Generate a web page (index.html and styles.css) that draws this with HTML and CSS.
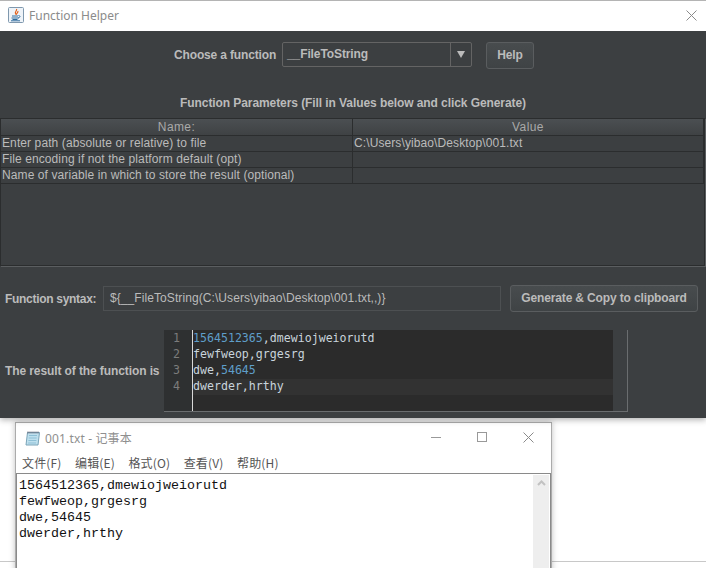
FILE: index.html
```html
<!DOCTYPE html>
<html>
<head>
  <meta charset="utf-8" />
  <title>Function Helper</title>
  <link rel="stylesheet" href="styles.css">
</head>
<body>
  <div class="helper">
    <div class="titlebar">
      <svg class="java-icon" width="16" height="16" viewBox="0 0 16 16">
        <rect x="0.5" y="0.5" width="15" height="15" rx="1" fill="#eef3f8" stroke="#7f98ae"/>
        <path d="M8.5 2c1 1.500-2 2.500-1 4.500 .3.500.6.800.8 1.200-.1-1.200 2.500-2.300 1.500-3.700" fill="none" stroke="#e2601a" stroke-width="1.200"/>
        <path d="M4 9h6M3.500 11h7M4.500 12.500h5" fill="none" stroke="#2f6c9e" stroke-width="1"/>
        <path d="M10.500 8.500c2 0 2 2-.5 2.500M3 13.800h9" fill="none" stroke="#2f6c9e" stroke-width="1"/>
      </svg>
      <span class="titlebar-text">Function Helper</span>
      <svg class="close-icon" width="11" height="11" viewBox="0 0 11 11">
        <path d="M.5.500l10 10M10.500.500l-10 10" stroke="#8a8a8a" stroke-width="1" fill="none"/>
      </svg>
    </div>

    <div class="panel">
      <div class="choose-row">
        <label class="bold-label">Choose a function</label>
        <div class="combo">
          <span class="combo-value">__FileToString</span>
          <span class="combo-arrow"><i></i></span>
        </div>
        <button class="btn btn-help" type="button">Help</button>
      </div>

      <div class="params-title">Function Parameters (Fill in Values below and click Generate)</div>

      <div class="params-table">
        <div class="row head-row">
          <div class="cell head">Name:</div>
          <div class="cell head">Value</div>
        </div>
        <div class="row">
          <div class="cell">Enter path (absolute or relative) to file</div>
          <div class="cell">C:\Users\yibao\Desktop\001.txt</div>
        </div>
        <div class="row">
          <div class="cell">File encoding if not the platform default (opt)</div>
          <div class="cell"></div>
        </div>
        <div class="row">
          <div class="cell">Name of variable in which to store the result (optional)</div>
          <div class="cell"></div>
        </div>
      </div>

      <div class="syntax-row">
        <label class="bold-label">Function syntax:</label>
        <div class="syntax-input">${__FileToString(C:\Users\yibao\Desktop\001.txt,,)}</div>
        <button class="btn btn-generate" type="button">Generate &amp; Copy to clipboard</button>
      </div>

      <div class="result-row">
        <label class="bold-label">The result of the function is</label>
        <div class="editor">
          <div class="gutter">
            <div>1</div>
            <div>2</div>
            <div>3</div>
            <div>4</div>
          </div>
          <div class="code">
            <div class="code-line"><span class="num">1564512365</span>,dmewiojweiorutd</div>
            <div class="code-line">fewfweop,grgesrg</div>
            <div class="code-line">dwe,<span class="num">54645</span></div>
            <div class="code-line current">dwerder,hrthy</div>
          </div>
          <div class="editor-scroll"></div>
        </div>
      </div>
    </div>
  </div>

  <div class="desktop">
    <div class="notepad">
      <div class="np-title">
        <svg class="np-icon" width="16" height="16" viewBox="0 0 16 16">
          <path d="M2.500 2.500h12l-1.500 12.500h-12z" fill="#bfe0ee" stroke="#7aa4b8"/>
          <path d="M4 5.500h8M3.700 8h8M3.400 10.500h8M3.100 13h8" stroke="#8fc0d6" stroke-width="1"/>
          <path d="M3 1.500v2M5 1.500v2M7 1.500v2M9 1.500v2M11 1.500v2M13 1.500v2" stroke="#667" stroke-width="1"/>
        </svg>
        <span class="np-title-text">001.txt - 记事本</span>
        <div class="np-controls">
          <svg width="11" height="11" viewBox="0 0 11 11"><path d="M0 5.500h10" stroke="#999" fill="none"/></svg>
          <svg width="11" height="11" viewBox="0 0 11 11"><rect x="0.500" y="0.500" width="9" height="9" stroke="#999" fill="none"/></svg>
          <svg width="11" height="11" viewBox="0 0 11 11"><path d="M.5.500l10 10M10.500.500l-10 10" stroke="#8a8a8a" fill="none"/></svg>
        </div>
      </div>
      <div class="np-menu">
        <span>文件(F)</span>
        <span>编辑(E)</span>
        <span>格式(O)</span>
        <span>查看(V)</span>
        <span>帮助(H)</span>
      </div>
      <div class="np-body">
        <div class="np-text">1564512365,dmewiojweiorutd
fewfweop,grgesrg
dwe,54645
dwerder,hrthy</div>
        <div class="np-scroll">
          <svg width="9" height="6" viewBox="0 0 9 6"><path d="M1 5l3.500-3.500L8 5" stroke="#c2c2c2" stroke-width="2" fill="none"/></svg>
        </div>
      </div>
    </div>
  </div>
</body>
</html>
```

FILE: styles.css
```css
html, body {
  margin: 0;
  padding: 0;
}

body {
  width: 706px;
  height: 568px;
  overflow: hidden;
  background: #fff;
  font-family: "Liberation Sans", Arial, sans-serif;
  font-size: 12px;
}

/* java window */
.helper {
  position: relative;
  z-index: 1;
  height: 418px;
  display: flex;
  flex-direction: column;
  box-shadow: 0 2px 6px rgba(0, 0, 0, 0.3);
}

.titlebar {
  height: 28px;
  display: flex;
  align-items: center;
  background: #fff;
  border-top: 1px solid #b4b4b4;
  padding: 0 9px 2px 8px;
}

.java-icon {
  margin-right: 5px;
}

.titlebar-text {
  flex: 1;
  font-family: "Noto Sans", sans-serif;
  font-size: 12px;
  margin-top: 1px;
  color: #8b8b8b;
}

.panel {
  flex: 1;
  background: #3c3f41;
  color: #bbbbbb;
  display: flex;
  flex-direction: column;
}

.bold-label {
  font-weight: bold;
  letter-spacing: -0.1px;
  color: #bbbbbb;
}

.choose-row {
  display: flex;
  align-items: flex-start;
  padding: 11px 0 0 174px;
  height: 27px;
}

.choose-row .bold-label {
  width: 102px;
  line-height: 26px;
  letter-spacing: -0.15px;
  white-space: nowrap;
}

.combo {
  width: 188px;
  height: 23px;
  margin-left: 6px;
  display: flex;
  border: 1px solid #646464;
  border-radius: 2px;
}

.combo-value {
  flex: 1;
  padding-left: 4px;
  font-weight: bold;
  letter-spacing: -0.1px;
  line-height: 22px;
}

.combo-arrow {
  width: 20px;
  display: flex;
  align-items: center;
  justify-content: center;
  border-left: 1px solid #646464;
}

.combo-arrow i {
  width: 0;
  height: 0;
  border-left: 4px solid transparent;
  border-right: 4px solid transparent;
  border-top: 7px solid #bbbbbb;
}

.btn {
  padding: 0 0 2px;
  font-family: "Liberation Sans", Arial, sans-serif;
  font-size: 12px;
  font-weight: bold;
  letter-spacing: -0.14px;
  color: #bbbbbb;
  background: linear-gradient(#484c4e, #3f4345);
  border: 1px solid #5a5d5f;
  border-radius: 3px;
}

.btn-help {
  width: 48px;
  height: 27px;
  margin-left: 14px;
}

.params-title {
  margin-top: 27px;
  height: 22px;
  line-height: 14px;
  text-align: center;
  font-weight: bold;
  letter-spacing: -0.08px;
}

.params-table {
  height: 146px;
  width: 703px;
  margin-bottom: 1px;
  border: 1px solid #2b2d2e;
  box-shadow: 1px 1px 0 #5b5e60;
}

.row {
  display: grid;
  grid-template-columns: 352px 351px;
  height: 15px;
  border-bottom: 1px solid #2b2d2e;
}

.head-row {
  height: 16px;
  background: linear-gradient(#4b4f52, #3f4244);
}

.cell {
  padding-left: 1px;
  line-height: 14px;
  letter-spacing: 0.1px;
  white-space: nowrap;
  border-right: 1px solid #2b2d2e;
}

.head {
  padding: 0;
  line-height: 17px;
  letter-spacing: 0.4px;
  text-align: center;
  color: #a9a9a9;
}

.syntax-row {
  display: flex;
  align-items: center;
  margin-top: 18px;
  padding-left: 5px;
  height: 27px;
}

.syntax-row .bold-label {
  width: 98px;
  letter-spacing: -0.3px;
  white-space: nowrap;
}

.syntax-input {
  width: 390px;
  height: 23px;
  padding-left: 6px;
  line-height: 23px;
  letter-spacing: 0.08px;
  border: 1px solid #4d5052;
  white-space: nowrap;
}

.btn-generate {
  width: 188px;
  height: 27px;
  margin-left: 9px;
}

.result-row {
  display: flex;
  align-items: center;
  margin-top: 18px;
  padding-left: 5px;
}

.result-row .bold-label {
  width: 159px;
  white-space: nowrap;
}

/* editor with the result */
.editor {
  width: 463px;
  height: 81px;
  display: flex;
  background: #2b2b2b;
  border-right: 1px solid #6a6d6f;
  border-bottom: 1px solid #6a6d6f;
  font-family: "DejaVu Sans Mono", monospace;
  font-size: 11.6px;
  line-height: 16px;
}

.gutter {
  width: 16px;
  padding: 0 12px 0 0;
  background: #2e3031;
  color: #7c7c7c;
  text-align: right;
  border-right: 1px solid #d8d8d8;
}

.code {
  flex: 1;
  padding-top: 1px;
  color: #c9d4dc;
}

.code-line {
  padding-left: 0;
  line-height: 14px;
  padding-bottom: 2px;
}

.code-line.current {
  background: #323232;
}

.num {
  color: #5f9ec9;
}

.editor-scroll {
  width: 14px;
  background: #3c3f41;
}

/* notepad */
.desktop {
  height: 150px;
  padding-left: 15px;
  padding-top: 4px;
  box-sizing: border-box;
  background: linear-gradient(#c8c8c8, #c8c8c8) 0 143px / 100% 1px no-repeat;
}

.notepad {
  width: 535px;
  height: 160px;
  display: flex;
  flex-direction: column;
  background: #fff;
  border: 1px solid #ababab;
  box-shadow: 0 0 6px rgba(0, 0, 0, 0.25);
}

.np-title {
  height: 29px;
  display: flex;
  align-items: center;
  padding-left: 9px;
}

.np-icon {
  margin-right: 4px;
}

.np-title-text {
  flex: 1;
  font-family: "Noto Sans", "Noto Sans CJK SC", sans-serif;
  font-size: 12px;
  letter-spacing: 0.15px;
  color: #8f8f8f;
}

.np-controls {
  display: flex;
  gap: 35px;
  padding-right: 17px;
}

.np-menu {
  height: 21px;
  display: flex;
  gap: 13.5px;
  padding-left: 6px;
  font-family: "Noto Sans CJK SC", sans-serif;
  font-size: 12px;
  letter-spacing: 0.15px;
  line-height: 21px;
  color: #555;
}

.np-body {
  flex: 1;
  display: flex;
  border-top: 1px solid #8a8a8a;
  border-left: 1px solid #8a8a8a;
  border-right: 1px solid #8a8a8a;
}

.np-text {
  flex: 1;
  padding: 4px 0 0 2px;
  white-space: pre;
  font-family: "Liberation Mono", monospace;
  font-size: 13.33px;
  line-height: 16px;
  color: #111;
}

.np-scroll {
  width: 16px;
  margin: 1px;
  background: #eeeeee;
  text-align: center;
}
```
